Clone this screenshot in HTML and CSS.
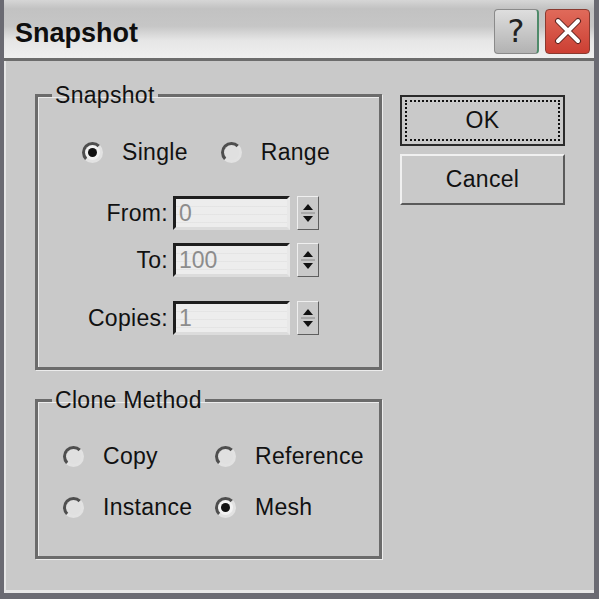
FILE: index.html
```html
<!DOCTYPE html>
<html lang="en">
<head>
  <meta charset="UTF-8" />
  <title>Snapshot</title>
  <link rel="stylesheet" href="styles.css">
</head>
<body>
  <div class="window">
    <div class="titlebar">
      <span class="title">Snapshot</span>
      <div class="title-buttons">
        <button class="cap-btn help">?</button>
        <button class="cap-btn close">
          <svg width="30" height="30" viewBox="0 0 30 30">
            <path d="M5 5 L25 25 M25 5 L5 25" stroke="#5a2320" stroke-width="6" stroke-linecap="round" />
            <path d="M5 5 L25 25 M25 5 L5 25" stroke="#ffffff" stroke-width="4" stroke-linecap="round" />
          </svg>
        </button>
      </div>
    </div>

    <div class="client">
      <div class="left-col">
        <fieldset class="group group-snapshot">
          <legend>Snapshot</legend>

          <div class="radio-row">
            <label class="radio"><span class="dot checked"></span>Single</label>
            <label class="radio radio-range"><span class="dot"></span>Range</label>
          </div>

          <div class="spin-grid">
            <span class="spin-label">From:</span>
            <span class="field">0</span>
            <span class="spinner">
              <svg width="18" height="30" viewBox="0 0 18 30">
                <path d="M9 6 L14 12 L4 12 Z" fill="#111" />
                <path d="M2 15 H16" stroke="#888" stroke-width="1" />
                <path d="M9 24 L14 18 L4 18 Z" fill="#111" />
              </svg>
            </span>

            <span class="spin-label">To:</span>
            <span class="field">100</span>
            <span class="spinner">
              <svg width="18" height="30" viewBox="0 0 18 30">
                <path d="M9 6 L14 12 L4 12 Z" fill="#111" />
                <path d="M2 15 H16" stroke="#888" stroke-width="1" />
                <path d="M9 24 L14 18 L4 18 Z" fill="#111" />
              </svg>
            </span>

            <span class="spin-label copies">Copies:</span>
            <span class="field copies">1</span>
            <span class="spinner copies">
              <svg width="18" height="30" viewBox="0 0 18 30">
                <path d="M9 6 L14 12 L4 12 Z" fill="#111" />
                <path d="M2 15 H16" stroke="#888" stroke-width="1" />
                <path d="M9 24 L14 18 L4 18 Z" fill="#111" />
              </svg>
            </span>
          </div>
        </fieldset>

        <fieldset class="group group-clone">
          <legend>Clone Method</legend>
          <div class="clone-grid">
            <label class="radio"><span class="dot"></span>Copy</label>
            <label class="radio"><span class="dot"></span>Reference</label>
            <label class="radio"><span class="dot"></span>Instance</label>
            <label class="radio"><span class="dot checked"></span>Mesh</label>
          </div>
        </fieldset>
      </div>

      <div class="right-col">
        <button class="push-btn default"><span>OK</span></button>
        <button class="push-btn">Cancel</button>
      </div>
    </div>
  </div>
</body>
</html>
```

FILE: styles.css
```css
/* Base */
body {
  margin: 0;
  background-color: #c9c9c9;
  font-family: 'Liberation Sans', Arial, sans-serif;
  color: #111;
}

.window {
  width: 599px;
  height: 599px;
  box-sizing: border-box;
  display: flex;
  flex-direction: column;
  background-color: #c9c9c9;
  border-left: 4px solid #6a6a72;
  border-right: 5px solid #6a6a72;
  border-bottom: 6px solid #6a6a72;
  box-shadow: inset 2px 0 0 #e6e6e6, inset 0 -3px 0 #e6e6e6;
}

/* Title bar */
.titlebar {
  height: 61px;
  box-sizing: border-box;
  display: flex;
  align-items: center;
  justify-content: space-between;
  padding: 0 4px 0 11px;
  background: linear-gradient(#d6d6d6 0, #c2c2c2 15%, #c6c6c6 45%, #e6e6e6 70%, #efefef 100%);
  border-bottom: 3px solid #6c6c6c;
}

.title {
  font-size: 27px;
  font-weight: bold;
  color: #0e0e0e;
  padding-top: 8px;
}

.title-buttons {
  display: flex;
  gap: 6px;
  padding-top: 4px;
}

.cap-btn {
  width: 45px;
  height: 45px;
  border-radius: 4px;
  padding: 0;
  display: flex;
  align-items: center;
  justify-content: center;
  font-family: 'DejaVu Sans', sans-serif;
}

.help {
  font-size: 32px;
  color: #222;
  background: linear-gradient(#dedede, #b2b2b2);
  border: 1px solid #8a8a8a;
  border-right: 2px solid #4f8a6a;
}

.close {
  background: linear-gradient(#e06a5a, #cc3f33);
  border: 1px solid #8a3a30;
}

/* Client area */
.client {
  display: flex;
  padding: 22px 0 0 31px;
}

.left-col {
  width: 347px;
  display: flex;
  flex-direction: column;
  gap: 18px;
}

.group {
  margin: 0;
  padding: 0;
  border: 3px solid #6b6b6b;
  box-shadow: 1px 1px 0 #ececec, inset 1px 1px 0 #ececec;
  box-sizing: border-box;
}

.group legend {
  font-size: 23px;
  line-height: 25px;
  letter-spacing: 0.3px;
  padding: 0 3px;
  margin-left: 14px;
}

.group-snapshot {
  height: 287px;
}

.group-clone {
  height: 171px;
}

/* Radio buttons */
.radio {
  display: flex;
  align-items: center;
  gap: 19px;
  height: 30px;
  font-size: 23px;
  letter-spacing: 0.3px;
}

.dot {
  width: 21px;
  height: 21px;
  box-sizing: border-box;
  border-radius: 50%;
  border: 3px solid;
  border-color: #4e4e4e #e2e2e2 #e2e2e2 #4e4e4e;
  background-color: #e0e0e0;
  position: relative;
}

.dot.checked {
  background-color: #f2f2f2;
}

.dot.checked::after {
  content: '';
  position: absolute;
  left: 3px;
  top: 3px;
  width: 9px;
  height: 9px;
  border-radius: 50%;
  background-color: #111;
}

.radio-row {
  display: flex;
  gap: 33px;
  padding-left: 44px;
  margin-top: 29px;
}

/* Spinner rows */
.spin-grid {
  display: grid;
  grid-template-columns: 130px 117px 24px;
  grid-auto-rows: 34px;
  row-gap: 13px;
  column-gap: 5px;
  margin-top: 29px;
  align-items: center;
}

.spin-label {
  text-align: right;
  font-size: 23px;
  letter-spacing: 0.3px;
}

.copies {
  margin-top: 22px;
}

.field {
  height: 34px;
  box-sizing: border-box;
  border: 3px solid;
  border-color: #1e1e1e #e8e8e8 #dcdcdc #1e1e1e;
  background: repeating-linear-gradient(#ededed 0, #ededed 7px, #dcdcdc 8px);
  font-size: 23px;
  line-height: 28px;
  color: #8c8c8c;
  padding-left: 3px;
}

.spinner {
  margin-left: 2px;
  width: 22px;
  height: 34px;
  box-sizing: border-box;
  border: 1px solid;
  border-color: #efefef #5e5e5e #5e5e5e #efefef;
  display: flex;
  align-items: center;
  justify-content: center;
}

/* Clone method */
.clone-grid {
  display: grid;
  grid-template-columns: 152px 1fr;
  row-gap: 21px;
  padding-left: 25px;
  margin-top: 28px;
}

/* Push buttons */
.right-col {
  display: flex;
  flex-direction: column;
  gap: 8px;
  margin-left: 18px;
  padding-top: 12px;
}

.push-btn {
  width: 165px;
  height: 51px;
  box-sizing: border-box;
  background-color: #c9c9c9;
  border: 2px solid;
  border-color: #f0f0f0 #5a5a5a #5a5a5a #f0f0f0;
  font-family: 'Liberation Sans', Arial, sans-serif;
  font-size: 23px;
  letter-spacing: 0.3px;
  color: #111;
  padding: 0;
}

.push-btn.default {
  border: 2px solid #2a2a2a;
  padding: 3px;
}

.push-btn.default span {
  display: flex;
  align-items: center;
  justify-content: center;
  height: 100%;
  border: 2px dotted #111;
  box-sizing: border-box;
}
```
